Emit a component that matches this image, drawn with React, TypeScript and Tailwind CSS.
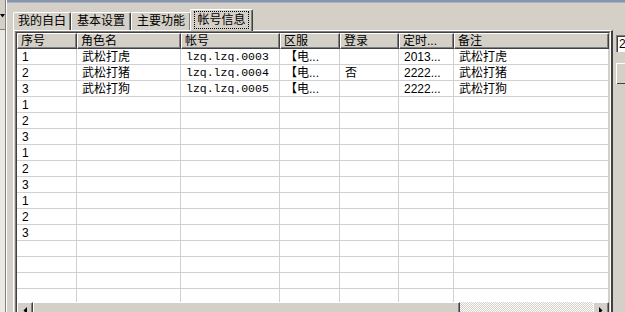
import React from 'react';

const cols = [
  { title: '序号', w: 'w-[60px]' },
  { title: '角色名', w: 'w-[104px]' },
  { title: '帐号', w: 'w-[99px]' },
  { title: '区服', w: 'w-[60px]' },
  { title: '登录', w: 'w-[59px]' },
  { title: '定时...', w: 'w-[55px]' },
  { title: '备注', w: 'w-[155px]' },
];

const rows: string[][] = [
  ['1', '武松打虎', 'lzq.lzq.0003', '【电...', '', '2013...', '武松打虎'],
  ['2', '武松打猪', 'lzq.lzq.0004', '【电...', '否', '2222...', '武松打猪'],
  ['3', '武松打狗', 'lzq.lzq.0005', '【电...', '', '2222...', '武松打狗'],
  ['1'], ['2'], ['3'], ['1'], ['2'], ['3'], ['1'], ['2'], ['3'],
  [], [], [], [], [],
];

const tabs = [
  { label: '我的自白', w: 'w-[58px]' },
  { label: '基本设置', w: 'w-[60px]' },
  { label: '主要功能', w: 'w-[60px]' },
];

const Triangle: React.FC<{ dir: 'left' | 'right' }> = ({ dir }) => (
  <svg width="4" height="7" viewBox="0 0 4 7">
    <polygon points={dir === 'left' ? '4,0 4,7 0.5,3.5' : '0,0 0,7 3.5,3.5'} fill="#000" />
  </svg>
);

const raised =
  'bg-[#d4d0c8] border-t border-l border-white border-r border-b border-r-[#404040] border-b-[#404040] shadow-[inset_-1px_-1px_#808080]';

const App: React.FC = () => {
  return (
    <div className="w-[625px] h-[312px] overflow-hidden flex bg-[#d4d0c8] text-[12px] text-black font-['Liberation_Sans','Noto_Sans_CJK_SC',sans-serif]">
      {/* left strip */}
      <div className="w-[7px] flex flex-col border-r border-r-white shrink-0">
        <div className="h-[30px] border-b border-b-[#808080] border-r border-r-[#808080] flex items-start pt-[14px]">
          <svg width="5" height="4" viewBox="0 0 5 4">
            <polygon points="0,0 5,0 2.5,3.5" fill="#000" />
          </svg>
        </div>
        <div className="flex-1 bg-[#ebe9e3] border-r border-r-[#808080]" />
      </div>

      <div className="flex-1 flex flex-col">
        <div className="h-[3px] shrink-0 bg-[#8794ae] border-b border-b-[#aab3c5]" />

        <div className="flex">
          {/* tab control */}
          <div className="flex flex-col w-[606px]">
            <div className="h-[27px] pl-[6px] flex items-end">
              {tabs.map((t) => (
                <div
                  key={t.label}
                  className={`${t.w} h-[18px] border-t border-l border-white border-r border-r-[#404040] shadow-[inset_-1px_0_#808080] rounded-t-[2px] flex items-center justify-center pb-[1px]`}
                >
                  {t.label}
                </div>
              ))}
              <div className="w-[63px] h-[22px] -ml-[1px] mb-[-1px] relative z-10 bg-[#d4d0c8] border-t border-l border-white border-r border-r-[#404040] shadow-[inset_-1px_0_#808080] rounded-t-[2px] flex items-start justify-center pt-[1px]">
                <div className="border border-dotted border-black px-[2px] h-[18px] leading-[16px]">帐号信息</div>
              </div>
            </div>

            {/* panel */}
            <div className="ml-[6px] w-[600px] border-t border-l border-white border-r-2 border-r-[#404040] pl-[1px]">
              {/* listview */}
              <div className="w-[596px] border-t border-l border-[#808080] border-r border-b border-r-white border-b-white">
                <div className="border-t border-l border-[#404040] border-r border-b border-r-[#d4d0c8] border-b-[#d4d0c8] flex flex-col bg-white">
                  {/* header */}
                  <div className="flex h-[16px] shrink-0">
                    {cols.map((c) => (
                      <div
                        key={c.title}
                        className={`${c.w} h-[16px] ${raised} pl-[3px] leading-[14px] whitespace-nowrap overflow-hidden`}
                      >
                        {c.title}
                      </div>
                    ))}
                  </div>
                  {/* body */}
                  <div className="h-[253px] shrink-0 overflow-hidden">
                    {rows.map((r, i) => (
                      <div key={i} className="flex h-[16px]">
                        {cols.map((c, j) => (
                          <div
                            key={j}
                            className={`${c.w} h-[16px] border-r border-b border-[#d0d0d0] pl-[5px] leading-[16px] whitespace-nowrap overflow-hidden ${
                              j === 2 ? "font-['Liberation_Mono',monospace] text-[11.5px]" : ''
                            } ${j === 3 ? 'pl-[2px]' : ''}`}
                          >
                            {r[j] ?? ''}
                          </div>
                        ))}
                      </div>
                    ))}
                  </div>
                  {/* horizontal scrollbar */}
                  <div className="flex h-[16px] shrink-0">
                    <div className={`w-[16px] h-[16px] ${raised} flex items-center justify-center`}>
                      <Triangle dir="left" />
                    </div>
                    <div className={`w-[427px] h-[16px] ${raised}`} />
                    <div className="flex-1 h-[16px] bg-[repeating-conic-gradient(#d4d0c8_0_25%,#ffffff_0_50%)] bg-[length:2px_2px]" />
                    <div className={`w-[16px] h-[16px] ${raised} flex items-center justify-center`}>
                      <Triangle dir="right" />
                    </div>
                  </div>
                </div>
              </div>
            </div>
          </div>

          {/* right column */}
          <div className="flex-1 flex flex-col pl-[3px] pt-[32px]">
            <div className="h-[17px] border-t border-l border-[#808080] bg-white">
              <div className="h-full border-t border-l border-[#404040] pl-[1px] leading-[14px]">2</div>
            </div>
            <div className="mt-[11px] h-[21px] border-t border-l border-white bg-[#d4d0c8] shadow-[inset_0_-1px_#404040]" />
          </div>
        </div>
      </div>
    </div>
  );
};

export default App;
